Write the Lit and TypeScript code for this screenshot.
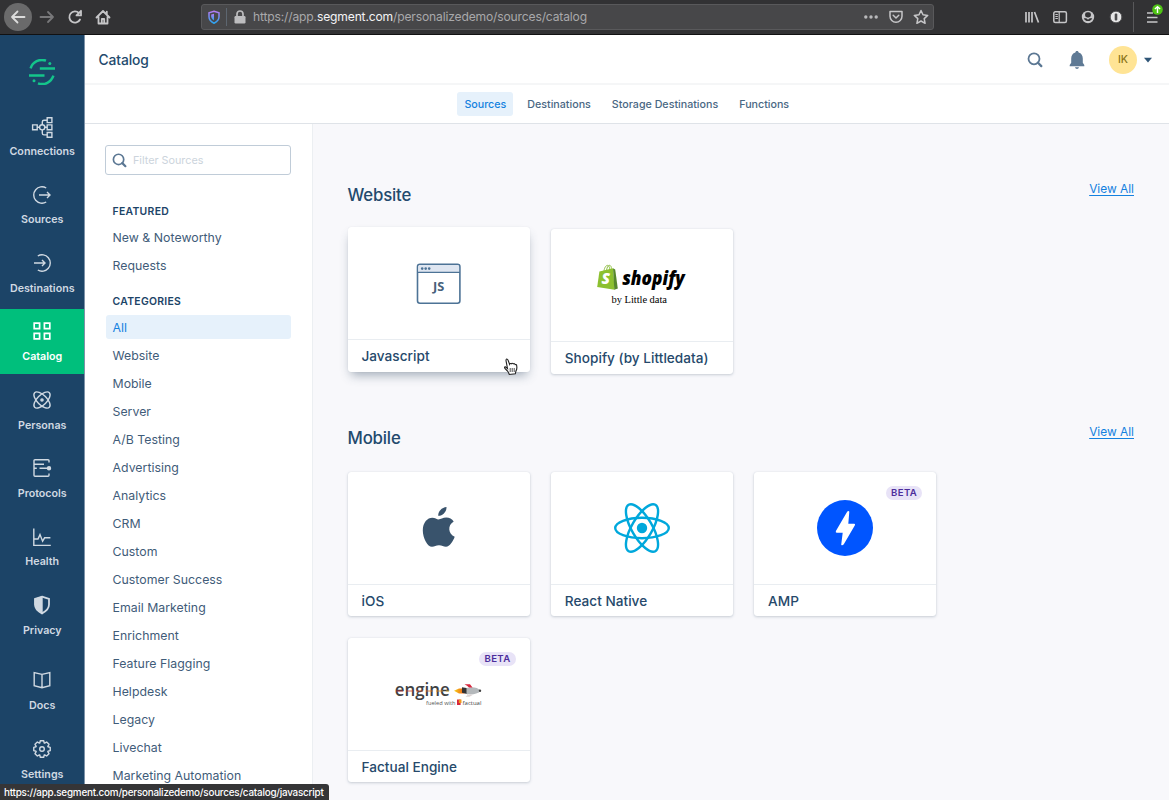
import { LitElement, html, css, svg, nothing } from "lit";
import { customElement, property } from "lit/decorators.js";
import { classMap } from "lit/directives/class-map.js";

const gear = (() => {
  const pts: string[] = [];
  for (let i = 0; i < 8; i++) {
    const a = (i * Math.PI) / 4;
    const at = (r: number, d: number) =>
      `${(10 + r * Math.sin(a + d)).toFixed(2)} ${(10 - r * Math.cos(a + d)).toFixed(2)}`;
    pts.push(at(6.4, -0.36), at(8.4, -0.2), at(8.4, 0.2), at(6.4, 0.36));
  }
  return "M" + pts.join("L") + "Z";
})();

const navIcons: Record<string, unknown> = {
  Connections: svg`<g transform="translate(.6 1.6)"><path d="M0 7.3h4.6v4.8H0zM14.6.2h4.7v4.8h-4.7zM14.6 7.3h4.7v4.8h-4.7zM14.6 14.9h4.7v4.8h-4.7zM12.2 9.7h2.4M4.6 9.7h2.2M14.6 2.6h-3.2q-1.7 0-1.7 1.7v3M9.7 12.4v3.2q0 1.7 1.7 1.7h3.2"/><circle cx="9.6" cy="9.7" r="2.6"/></g>`,
  Sources: svg`<path d="M14.2 3A8.2 8.2 0 1 0 14.2 17M7 10h11M15 7l3 3-3 3"/>`,
  Destinations: svg`<path d="M5.8 3A8.2 8.2 0 1 1 5.8 17M2 10h11M10 7l3 3-3 3"/>`,
  Catalog: svg`<path d="M2.2 2.2h5.4v5.4H2.2zM12.4 2.2h5.4v5.4h-5.4zM2.2 12.4h5.4v5.4H2.2zM12.4 12.4h5.4v5.4h-5.4z" stroke-width="1.7"/>`,
  Personas: svg`<ellipse cx="10" cy="10" rx="10.4" ry="4.8" transform="rotate(45 10 10)"/><ellipse cx="10" cy="10" rx="10.4" ry="4.8" transform="rotate(-45 10 10)"/><circle cx="10" cy="10" r="1.1" fill="currentColor"/>`,
  Protocols: svg`<path d="M17 4.4V2.8q0-1-1-1H3q-1 0-1 1v3.4h10M2 10.2h2.8M7.5 10.2h9.5M2 14v3.2q0 1 1 1h13q1 0 1-1v-1.8M2 6v8"/><circle cx="17" cy="10.2" r="1.5" fill="currentColor"/>`,
  Health: svg`<path d="M1.8 1.5v16.9h17M2 12h4l2-4.4 2.6 6.6 2-3.4h5.8"/>`,
  Privacy: svg`<path d="M10 1.6l7 2.4v5.6c0 4-3 6.8-7 8.8-4-2-7-4.8-7-8.8V4z" stroke-width="1.8"/><path d="M10 2v16c-4-2-6.6-4.6-6.6-8.4V4.2z" fill="currentColor"/>`,
  Docs: svg`<path d="M10 4.4L2.2 2.6v13.2L10 17.8l7.8-2V2.6zM10 4.4v13.4"/>`,
  Settings: svg`<path d=${gear} stroke-linejoin="round"/><circle cx="10" cy="10" r="2.3"/>`,
};

const navItems = ["Connections", "Sources", "Destinations", "Catalog", "Personas", "Protocols", "Health", "Privacy", "Docs", "Settings"];
const tabs = ["Sources", "Destinations", "Storage Destinations", "Functions"];
const featured = ["New & Noteworthy", "Requests"];
const categories = ["All", "Website", "Mobile", "Server", "A/B Testing", "Advertising", "Analytics", "CRM", "Custom", "Customer Success", "Email Marketing", "Enrichment", "Feature Flagging", "Helpdesk", "Legacy", "Livechat", "Marketing Automation"];

const magnifier = (size: number) => html`<svg width=${size} height=${size} viewBox="0 0 16 16" fill="none" stroke="#5b7793">
  <circle cx="7" cy="6.8" r="5.5" stroke-width="1.8"/><path d="M11 10.8l3.3 3.3" stroke-width="2.3" stroke-linecap="round"/></svg>`;

const logos: Record<string, unknown> = {
  js: html`<svg width="46" height="42" viewBox="0 0 46 42">
    <rect x="1.5" y="1.2" width="42.4" height="39" rx="2.5" fill="#fff" stroke="#4d7396" stroke-width="1.6"/>
    <path d="M2.3 9V3.6Q2.3 2 4 2h37.4q1.7 0 1.7 1.6V9z" fill="#dfe6f1"/>
    <path d="M1.5 9.4h42.4" stroke="#4d7396" stroke-width="1.4"/>
    <g fill="#4d7396"><circle cx="6.2" cy="5.6" r="1.3"/><circle cx="9.7" cy="5.6" r="1.3"/><circle cx="13.2" cy="5.6" r="1.3"/></g>
    <text x="22.700" y="28.200" text-anchor="middle" font-family="Open Sans" font-weight="700" font-size="12.800" fill="#47617b">JS</text></svg>`,
  shopify: html`<svg width="90" height="44" viewBox="0 0 90 44">
    <path d="M7 7C7.500 3 9.500.8 11 1.500S12.600 4 12.600 6M9.500 6.500C10 2.500 12 .5 13.300 1.600S14.300 4 14.300 5.500" fill="none" stroke="#8fbd45" stroke-width="1"/>
    <path d="M2.400 7.600L16 4.200l1.600 21.600L.2 22.900z" fill="#8cc02f"/>
    <path d="M16 4.200l2.200 1.400 2.600 18.800-3.500 1.400z" fill="#56872c"/>
    <text x="4.500" y="20.300" font-family="Open Sans" font-style="italic" font-weight="800" font-size="16" textLength="8.500" lengthAdjust="spacingAndGlyphs" fill="#fff">S</text>
    <text x="25.200" y="21.300" font-family="Open Sans" font-style="italic" font-weight="800" font-size="18.500" textLength="62.500" lengthAdjust="spacingAndGlyphs" fill="#000">shopify</text>
    <text x="14.500" y="38.700" font-family="Liberation Serif" font-size="10.500" textLength="55.500" fill="#000">by Little data</text></svg>`,
  apple: html`<svg width="33" height="42" viewBox="0 0 33 42" fill="#39536c">
    <path d="M24.500 0c.3 4.600-3.900 9-8.300 8.800C15.800 4.400 20 .4 24.500 0z"/>
    <path d="M16.500 12.400c2.300 0 4.200-1.900 7.800-1.900 3.100 0 5.700 1.500 7.400 4-6.500 3.800-5.500 12.600 1 15.200-1.500 4.200-5 10-8.700 10.100-2.700 0-3.800-1.600-7-1.600s-4.300 1.600-7 1.600C5.600 39.800.8 30.900.8 23.400c0-8 4.700-12.700 9.500-12.700 2.700 0 4.500 1.700 6.200 1.700z"/></svg>`,
  react: html`<svg width="56" height="52" viewBox="-28 -26 56 52" fill="none" stroke="#00a8dc" stroke-width="2.400">
    <ellipse rx="26.800" ry="10.200"/><ellipse rx="26.800" ry="10.200" transform="rotate(60)"/><ellipse rx="26.800" ry="10.200" transform="rotate(120)"/>
    <circle r="5.200" fill="#00a8dc" stroke="none"/></svg>`,
  amp: html`<svg width="56" height="56" viewBox="0 0 56 56"><circle cx="28" cy="28" r="28" fill="#0055ff"/>
    <path d="M30.300 11.500q1.600-1.200 2 .3L31.300 23.800h6q1.200.1.600 1.400L26.800 44.300q-1.600 1.800-2.600.4L25.700 32.800h-6q-1.400-.2-.8-1.700z" fill="#fff"/></svg>`,
  engine: html`<svg width="90" height="30" viewBox="0 0 90 30">
    <defs><linearGradient id="flame"><stop offset="0" stop-color="#f7d117"/><stop offset="1" stop-color="#ee5a1a"/></linearGradient>
    <linearGradient id="stripe" gradientUnits="userSpaceOnUse" x1="2" y1="0" x2="55" y2="0"><stop offset="0" stop-color="#c1272d"/><stop offset=".5" stop-color="#d4572a"/><stop offset="1" stop-color="#e8b51d"/></linearGradient></defs>
    <text x=".8" y="16.800" font-family="Open Sans" font-weight="600" font-size="18.500" textLength="55" lengthAdjust="spacingAndGlyphs" fill="#3f4143">engine</text>
    <path d="M2 12h53" stroke="url(#stripe)" stroke-width="1" stroke-dasharray="7 3" opacity=".8"/>
    <path d="M60 11.700l5-2.300h5.500v5H65z" fill="url(#flame)"/><path d="M68 8.200l6 1v6l-6-1.500z" fill="#333"/>
    <path d="M72.500 8.900q9-2.200 14.500 2.800-6 5-14.500 3.300z" fill="#b4b8bb"/><path d="M70.500 5.200h5.500l2.500 3.300H75l-2-1.700z" fill="#d7263d"/><path d="M74 15.800h5l-3.500 2h-4z" fill="#ddd3d3"/><circle cx="86" cy="11.800" r="1.200" fill="#444"/>
    <text x="32" y="26" font-family="Open Sans" font-size="6" textLength="29.500" lengthAdjust="spacingAndGlyphs" fill="#555">fueled with</text>
    <path d="M63 20.500h3.600v5.500H63z" fill="#d7263d"/><path d="M64.800 20.500h2.700v3.500h-2.700z" fill="#f29b1d"/>
    <text x="68.500" y="26" font-family="Open Sans" font-size="6" textLength="19" lengthAdjust="spacingAndGlyphs" fill="#444">factual</text></svg>`,
};

interface Source { name: string; logo: string; beta?: boolean; hover?: boolean }
const sections: { title: string; items: Source[] }[] = [
  { title: "Website", items: [{ name: "Javascript", logo: "js", hover: true }, { name: "Shopify (by Littledata)", logo: "shopify" }] },
  { title: "Mobile", items: [{ name: "iOS", logo: "apple" }, { name: "React Native", logo: "react" }, { name: "AMP", logo: "amp", beta: true }, { name: "Factual Engine", logo: "engine", beta: true }] },
];

@customElement("browser-bar")
class BrowserBar extends LitElement {
  static styles = css`
    :host { display: flex; align-items: center; height: 35px; box-sizing: border-box; background: #323234; border-bottom: 1px solid #111112; color: #c6c6c8; padding-bottom: 1px; flex: none; }
    .back { width: 28px; height: 28px; border-radius: 50%; background: #6a6a6b; margin-left: 4px; display: grid; place-items: center; }
    .ic { display: block; fill: none; stroke: currentColor; stroke-width: 1.8; stroke-linecap: round; stroke-linejoin: round; }
    .fwd { margin-left: 7px; color: #78787a; }
    .reload { margin-left: 12px; }
    .home { margin-left: 12px; }
    .url { margin-left: 90px; width: 733px; height: 26px; box-sizing: border-box; border: 1px solid #59595b; border-radius: 3px; background: #474749; display: flex; align-items: center; }
    .shield { margin-left: 5px; }
    .sep { width: 1px; height: 18px; background: #5d6670; margin: 0 6px 0 5px; }
    .addr { margin-left: 6px; flex: 1; font: 12.1px/20px Inter, sans-serif; letter-spacing: -0.16px; color: #a9a9ab; white-space: nowrap; padding-top: 1px; }
    .host { color: #f4f4f5; }
    .dots { margin-right: 9px; }
    .pocket { margin-right: 9px; }
    .star { margin-right: 4px; }
    .tools { margin-left: auto; display: flex; align-items: center; gap: 12px; padding-right: 5px; }
    .rule { width: 1px; height: 30px; background: #58585a; margin-right: -2px; margin-left: -3px; }
  `;
  render() {
    return html`
      <div class="back"><svg class="ic" width="16" height="16" viewBox="0 0 16 16"><path d="M14.500 8H2M7.500 2.500L2 8l5.500 5.500" stroke="#dcdcdc"/></svg></div>
      <svg class="ic fwd" width="16" height="16" viewBox="0 0 16 16"><path d="M1.500 8H14M9 3l5 5-5 5"/></svg>
      <svg class="ic reload" width="16" height="16" viewBox="0 0 16 16"><path d="M13 10.500A5.600 5.600 0 1 1 12 4.200M14 1.800v4.600H9.500z"/></svg>
      <svg class="ic home" width="16" height="16" viewBox="0 0 16 16"><path d="M1.500 8.500L8 2l6.500 6.500M3.500 8v6.500h9V8M6.800 14.500V10h2.400v4.500M11.800 2.600v2.600"/></svg>
      <div class="url">
        <svg class="shield" width="14" height="16" viewBox="0 0 14 16"><defs><linearGradient id="sg" x2="0" y2="1"><stop stop-color="#b57bf5"/><stop offset="1" stop-color="#2aa4ee"/></linearGradient></defs>
          <path d="M7 2.300l5 1.500v4c0 3-2 5-5 6.400-3-1.400-5-3.400-5-6.400v-4z" fill="none" stroke="url(#sg)" stroke-width="1.500"/><path d="M7 4.800v6.600C5 10.200 4.200 9 4.200 7.300V5.600z" fill="url(#sg)"/></svg>
        <div class="sep"></div>
        <svg width="14" height="16" viewBox="0 0 14 16"><rect x="1.500" y="7" width="11" height="7.500" rx="1.200" fill="#bdbdbf"/><path d="M4 7.500V5a3 3 0 0 1 6 0v2.500" fill="none" stroke="#bdbdbf" stroke-width="1.700"/></svg>
        <div class="addr">https://app.<span class="host">segment.com</span>/personalizedemo/sources/catalog</div>
        <svg class="dots" width="16" height="16" viewBox="0 0 16 16" fill="#b9b9bb"><circle cx="2.800" cy="8" r="1.700"/><circle cx="8" cy="8" r="1.700"/><circle cx="13.200" cy="8" r="1.700"/></svg>
        <svg class="ic pocket" width="16" height="16" viewBox="0 0 16 16"><path d="M2 2.500h12v4.700a6 6 0 0 1-12 0zM5.200 6.300L8 9l2.800-2.700" stroke-width="1.500"/></svg>
        <svg class="ic star" width="16" height="16" viewBox="0 0 16 16"><path d="M8 1.500l2 4.300 4.700.6-3.500 3.200.9 4.700L8 12l-4.100 2.300.9-4.700L1.300 6.400 6 5.800z" stroke-width="1.500"/></svg>
      </div>
      <div class="tools">
        <svg class="ic" width="16" height="16" viewBox="0 0 16 16"><path d="M2 3v10.500M5 3v10.500M8 3v10.500M10.500 3l4 10.500" stroke-width="1.700" stroke-linecap="butt"/></svg>
        <svg class="ic" width="16" height="16" viewBox="0 0 16 16"><rect x="1.800" y="2.800" width="12.600" height="10.600" rx="1.500" stroke-width="1.500"/><path d="M7.200 3v10.400M3.800 5.500h1.600M3.800 7.500h1.600M3.800 9.500h1.600" stroke-width="1.200"/></svg>
        <svg width="16" height="16" viewBox="0 0 16 16"><circle cx="8" cy="8" r="6.200" fill="#c6c6c8"/><rect x="5" y="3.300" width="6" height="5.200" rx="2.400" fill="#323234"/><path d="M3.800 9.200a4.400 4 0 0 0 8.400 0z" fill="#323234"/><path d="M6.200 9h3.600L8 10.700z" fill="#c6c6c8"/></svg>
        <svg width="16" height="16" viewBox="0 0 16 16"><circle cx="8" cy="8" r="5.800" fill="#e6e6e6" stroke="#59595b" stroke-width="1"/><rect x="6.700" y="4.400" width="2.600" height="7.200" rx="1" fill="#4c4c4e"/></svg>
        <div class="rule"></div>
        <svg width="20" height="30" viewBox="0 0 20 30"><path d="M3 11h6M3 15.500h10.500M3 20h10.500" stroke="#c6c6c8" stroke-width="1.700"/><circle cx="13.500" cy="7.500" r="5.300" fill="#4fc414"/><path d="M13.500 11V4.800M10.900 7.100l2.600-2.500 2.600 2.500" fill="none" stroke="#fff" stroke-width="1.400"/></svg>
      </div>`;
  }
}

@customElement("source-card")
class SourceCard extends LitElement {
  @property({ attribute: false }) source!: Source;
  static styles = css`
    :host { display: block; }
    .card { position: relative; width: 182px; height: 144.500px; border-radius: 3px; background: #fff; box-shadow: 0 0 1px rgba(67, 90, 111, 0.16), 0 1px 3px rgba(67, 90, 111, 0.26); display: flex; flex-direction: column; }
    .hover { margin-top: -2px; box-shadow: 0 0 1px rgba(67, 90, 111, 0.16), 0 6px 10px -3px rgba(50, 75, 100, 0.45); }
    .art { height: 113px; box-sizing: border-box; border-bottom: 1px solid #e9edf1; display: grid; place-items: center; padding-top: 1px; }
    .art svg { display: block; overflow: visible; }
    .name { flex: 1; display: flex; align-items: center; padding-left: 14px; padding-top: 1px; font-size: 13.600px; letter-spacing: 0.02px; font-weight: 500; color: #26496b; }
    .badge { position: absolute; top: 14px; right: 14px; height: 14px; padding: 0 5px; border-radius: 7px; background: #e8e3f7; color: #4c2d9c; font-size: 9.600px; line-height: 14px; font-weight: 600; letter-spacing: 0.35px; }
    .pointer { position: absolute; left: 155px; top: 131px; }
  `;
  render() {
    const s = this.source;
    return html`<div class=${classMap({ card: true, hover: !!s.hover })}>
      <div class="art">${logos[s.logo]}</div><div class="name">${s.name}</div>
      ${s.beta ? html`<div class="badge">BETA</div>` : nothing}
      ${s.hover ? html`<svg class="pointer" width="16" height="18" viewBox="0 0 16 18"><path d="M4.500 10.500L3 2.600Q3-.2 5 2l1.600 4.300q.4-1.200 1.800-.5.600-1 1.900.1 1.200-.8 1.900.7 1.600-.3 1.500 1.300.6 3-.8 5.200l-.6 2.700-6 .7Q5.700 13.500 2 10.500.8 8.500 2.600 8.900z" fill="#fff" stroke="#222" stroke-width="1.100"/><path d="M7.200 10v4M9.200 10v4M11.200 10v4" stroke="#222" stroke-width=".8"/></svg>` : nothing}
    </div>`;
  }
}

@customElement("app-root")
class AppRoot extends LitElement {
  static styles = css`
    :host { display: flex; flex-direction: column; position: relative; width: 1169px; height: 800px; overflow: hidden; font-family: Inter, sans-serif; background: #fff; }
    .body { flex: 1; min-height: 0; display: flex; }
    .nav { flex: none; width: 84.500px; box-sizing: border-box; background: #1c4467; border-right: 1px solid #7d92a8; }
    .brand { height: 68.800px; display: grid; place-items: center; padding-top: 5px; box-sizing: border-box; }
    .item { height: 65px; margin-bottom: 3.400px; display: flex; flex-direction: column; align-items: center; color: #d0d9e2; font-size: 10.700px; font-weight: 600; line-height: 16px; box-sizing: border-box; padding: 12.500px 0 0 1px; gap: 7.700px; }
    .item svg { fill: none; stroke: currentColor; stroke-width: 1.400; overflow: visible; flex: none; }
    .item.active { background: #00bf7c; color: #fff; }
    .item.gap { margin-top: 10.400px; }
    .main { flex: 1; min-width: 0; display: flex; flex-direction: column; }
    .top { display: flex; align-items: center; padding: 1px 17px 0 14px; box-sizing: border-box; height: 50px; border-bottom: 2px solid #f5f6f7; color: #234a6d; font-size: 13.800px; font-weight: 500; letter-spacing: -0.1px; }
    .top .tools { margin-left: auto; display: flex; align-items: center; }
    .bell { margin: 0 23px 0 25px; }
    .avatar { width: 28px; height: 28px; border-radius: 50%; background: #ffe495; color: #8a7317; font-size: 10.500px; display: grid; place-items: center; margin-right: 7px; }
    .tabs { height: 38px; display: flex; justify-content: center; align-items: center; border-bottom: 1px solid #dfe3e8; gap: 7px; font-size: 10.700px; font-weight: 500; color: #496783; }
    .tab { height: 24px; line-height: 25px; padding: 0 7px; border-radius: 3px; }
    .tab.active { background: #e6f1fb; color: #1481df; }
    .cols { flex: 1; min-height: 0; display: flex; }
    .filters { width: 228px; flex: none; box-sizing: border-box; padding: 21px 21px 0; border-right: 1px solid #eceff2; overflow: hidden; }
    .search { height: 30px; box-sizing: border-box; border: 1px solid #c0ccd8; border-radius: 3px; display: flex; align-items: center; margin: 0 -0.500px; padding-left: 6px; gap: 6px; font-size: 10.800px; color: #ccd4dc; }
    h3 { margin: 0 0 5px; padding-left: 7px; font-size: 10.400px; line-height: 16px; font-weight: 600; letter-spacing: 0.3px; color: #1c4467; }
    .search + h3 { margin-top: 29px; margin-bottom: 5px; }
    .row { height: 24px; line-height: 26px; margin-bottom: 4px; padding-left: 7px; border-radius: 3px; font-size: 12.300px; letter-spacing: 0.03px; color: #3f5c79; white-space: nowrap; }
    .row.active { background: #e6f1fb; color: #1481df; }
    .row.last { margin-bottom: 17px; }
    .content { flex: 1; min-width: 0; background: #f8f8fb; padding: 59px 35px 0; overflow: hidden; }
    .head { display: flex; justify-content: space-between; height: 46.200px; }
    h2 { margin: 0; font-size: 16.800px; line-height: 24px; font-weight: 500; color: #234a6d; letter-spacing: -0.18px; }
    .all { font-size: 11.900px; line-height: 12px; height: 12px; color: #1481df; text-decoration: underline; text-underline-offset: 2px; }
    .grid { display: flex; flex-wrap: wrap; gap: 21.600px 21.300px; margin-bottom: 51.900px; }
    .status { position: absolute; left: 0; bottom: 0; height: 16px; line-height: 17px; width: 329px; box-sizing: border-box; padding-left: 4px; background: #353537; border-top-right-radius: 3px; color: #fff; font-size: 9.900px; white-space: nowrap; letter-spacing: -0.22px; font-weight: 500; }
  `;
  render() {
    const row = (c: string, last = false) => html`<div class=${classMap({ row: true, active: c === "All", last })}>${c}</div>`;
    return html`
      <browser-bar></browser-bar>
      <div class="body">
        <nav class="nav">
          <div class="brand"><svg width="26" height="26" viewBox="0 0 26 26" fill="none" stroke="#14c58b" stroke-width="2.500">
            <path d="M1.600 9.300A12 12 0 0 1 17 1.600M24.400 16.700A12 12 0 0 1 9 24.400" /><path d="M10.800 9.500H26M0 16.400h15.500"/><circle cx="20.800" cy="4.400" r="1.500" fill="#14c58b" stroke="none"/><circle cx="5" cy="21.800" r="1.500" fill="#14c58b" stroke="none"/></svg></div>
          ${navItems.map((n) => html`<div class=${classMap({ item: true, active: n === "Catalog", gap: n === "Docs" })}><svg width="20" height="20" viewBox="0 0 20 20">${navIcons[n]}</svg><span>${n}</span></div>`)}
        </nav>
        <div class="main">
          <header class="top"><span>Catalog</span>
            <div class="tools">${magnifier(16)}
              <svg class="bell" width="18" height="20" viewBox="0 0 18 20" fill="#5f7a95"><path d="M9 1c1 0 1.600.6 1.600 1.500 2.800.8 4.200 3 4.200 6v4.300l1.500 2.200v1.200H1.700V15l1.500-2.200V8.500c0-3 1.400-5.200 4.200-6C7.400 1.600 8 1 9 1zM7 17.300h4c-.3 1.200-1 1.700-2 1.700s-1.700-.5-2-1.700z"/></svg>
              <div class="avatar">IK</div><svg width="8" height="6" viewBox="0 0 8 6"><path d="M0 .8h8L4 5.500z" fill="#2f5577"/></svg>
            </div>
          </header>
          <div class="tabs">${tabs.map((t) => html`<div class=${classMap({ tab: true, active: t === "Sources" })}>${t}</div>`)}</div>
          <div class="cols">
            <aside class="filters">
              <div class="search">${magnifier(15)}<span>Filter Sources</span></div>
              <h3>FEATURED</h3>${featured.map((f, i) => row(f, i === 1))}
              <h3>CATEGORIES</h3>${categories.map((c) => row(c))}
            </aside>
            <div class="content">${sections.map((s) => html`
              <div class="head"><h2>${s.title}</h2><span class="all">View All</span></div>
              <div class="grid">${s.items.map((i) => html`<source-card .source=${i}></source-card>`)}</div>`)}
            </div>
          </div>
        </div>
      </div>
      <div class="status">https://app.segment.com/personalizedemo/sources/catalog/javascript</div>`;
  }
}
